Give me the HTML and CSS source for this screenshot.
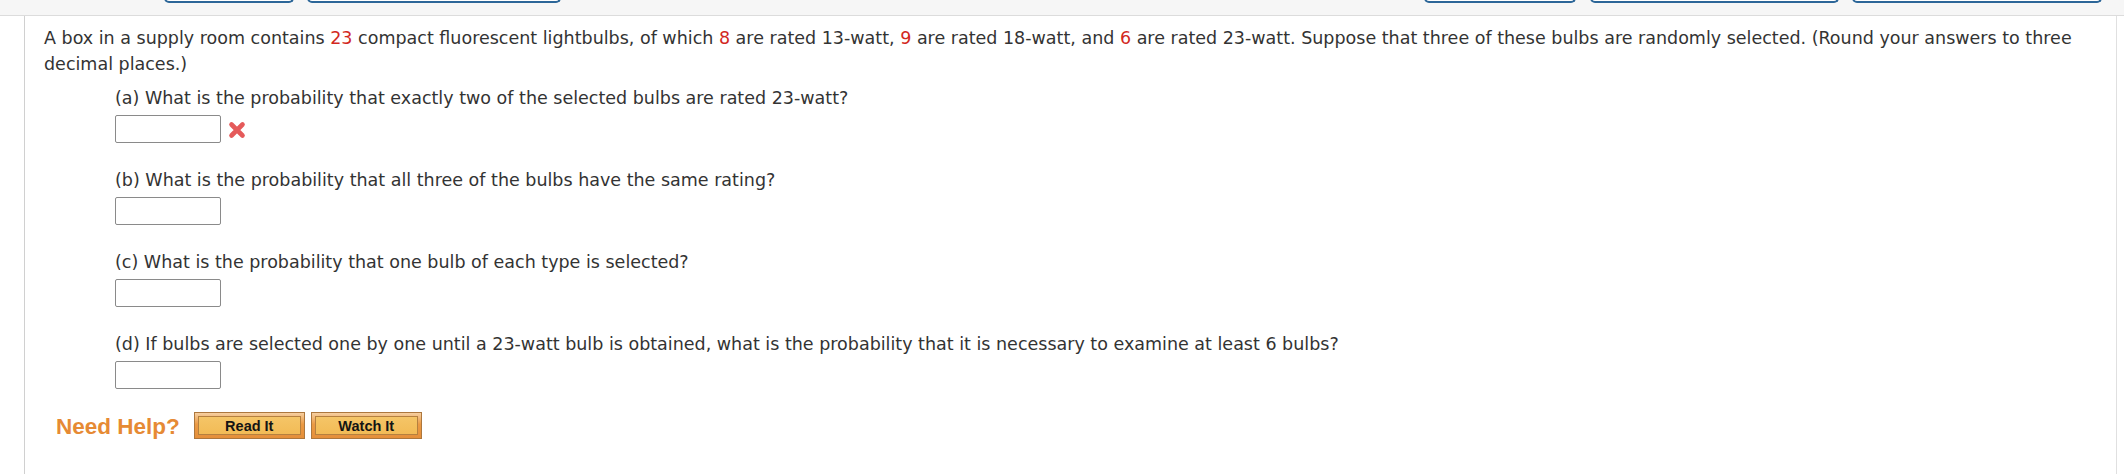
FILE: index.html
```html
<!DOCTYPE html>
<html>
<head>
<meta charset="utf-8">
<link rel="stylesheet" href="styles.css">
</head>
<body>
<div class="topbar">
  <div class="tab t1"></div>
  <div class="tab t2"></div>
  <div class="spacer"></div>
  <div class="tab t3"></div>
  <div class="tab t4"></div>
  <div class="tab t5"></div>
</div>
<div class="panel">
  <p class="intro">A box in a supply room contains <span class="num">23</span> compact fluorescent lightbulbs, of which <span class="num">8</span> are rated 13-watt, <span class="num">9</span> are rated 18-watt, and <span class="num">6</span> are rated 23-watt. Suppose that three of these bulbs are randomly selected. (Round your answers to three decimal places.)</p>
  <div class="questions">
    <div class="q">
      <div class="qtext">(a) What is the probability that exactly two of the selected bulbs are rated 23-watt?</div>
      <div class="answer">
        <span class="box"></span>
        <svg class="xmark" width="18" height="18" viewBox="0 0 18 18"><path d="M3.5 3.5 L14.5 14.5 M14.5 3.5 L3.5 14.5" stroke="#e55a5a" stroke-width="4.6" stroke-linecap="round"/></svg>
      </div>
    </div>
    <div class="q">
      <div class="qtext">(b) What is the probability that all three of the bulbs have the same rating?</div>
      <div class="answer"><span class="box"></span></div>
    </div>
    <div class="q">
      <div class="qtext">(c) What is the probability that one bulb of each type is selected?</div>
      <div class="answer"><span class="box"></span></div>
    </div>
    <div class="q">
      <div class="qtext">(d) If bulbs are selected one by one until a 23-watt bulb is obtained, what is the probability that it is necessary to examine at least 6 bulbs?</div>
      <div class="answer"><span class="box"></span></div>
    </div>
  </div>
  <div class="help">
    <span class="help-label">Need Help?</span>
    <span class="btn"><span class="btn-inner">Read It</span></span>
    <span class="btn"><span class="btn-inner">Watch It</span></span>
  </div>
</div>
</body>
</html>
```

FILE: styles.css
```css
html, body {
  margin: 0;
  padding: 0;
  background: #ffffff;
}
body {
  font-family: "DejaVu Sans", Verdana, sans-serif;
  font-size: 17.5px;
  color: #333333;
  height: 474px;
  overflow: hidden;
}
.topbar {
  height: 15px;
  background: #f6f6f6;
  border-bottom: 1px solid #dcdcdc;
  display: flex;
  overflow: hidden;
  padding-left: 164px;
  padding-right: 22px;
}
.tab {
  height: 10px;
  margin-top: -7px;
  border: 2px solid #2c6698;
  border-top: none;
  border-radius: 0 0 5px 5px;
  background: #ffffff;
  box-sizing: border-box;
}
.t1 { width: 130px; }
.t2 { width: 254px; margin-left: 13px; }
.spacer { flex: 1; }
.t3 { width: 152px; }
.t4 { width: 249px; margin-left: 14px; }
.t5 { width: 250px; margin-left: 13px; }
.panel {
  margin-left: 24px;
  margin-right: 7px;
  border-left: 1px solid #d0d0d0;
  border-right: 1px solid #e0e0e0;
  height: 458px;
  padding: 10px 30px 0 19px;
  box-sizing: border-box;
}
.intro {
  margin: 0;
  line-height: 25.5px;
}
.num {
  color: #d2281e;
}
.questions {
  margin-top: 9px;
  padding-left: 71px;
  display: flex;
  flex-direction: column;
  gap: 25.5px;
}
.qtext {
  line-height: 25.5px;
}
.answer {
  margin-top: 3px;
  display: flex;
  align-items: center;
  gap: 7px;
  height: 28px;
}
.box {
  display: block;
  width: 106px;
  height: 28px;
  box-sizing: border-box;
  border: 1px solid #8a8a8a;
  border-radius: 2px;
  background: #fff;
}
.xmark {
  display: block;
  margin-top: 2px;
}
.help {
  margin-top: 23px;
  padding-left: 12px;
  display: flex;
  align-items: center;
  height: 28px;
}
.help-label {
  font-family: "Liberation Sans", Arial, sans-serif;
  font-weight: bold;
  font-size: 22.5px;
  color: #e68a34;
  margin-right: 14px;
  margin-top: 2px;
}
.btn {
  display: block;
  width: 111px;
  height: 27px;
  box-sizing: border-box;
  border: 1px solid #ad773d;
  padding: 3px;
  background: linear-gradient(#f6cfa0 0%, #eb9a44 45%, #e58f3a 100%);
  margin-right: 6px;
}
.btn-inner {
  display: flex;
  align-items: center;
  justify-content: center;
  height: 100%;
  box-sizing: border-box;
  border: 1px solid #b5803f;
  background: linear-gradient(#f5c567, #f2bb56);
  font-family: "Liberation Sans", Arial, sans-serif;
  font-weight: bold;
  font-size: 14.5px;
  color: #141414;
}
```
